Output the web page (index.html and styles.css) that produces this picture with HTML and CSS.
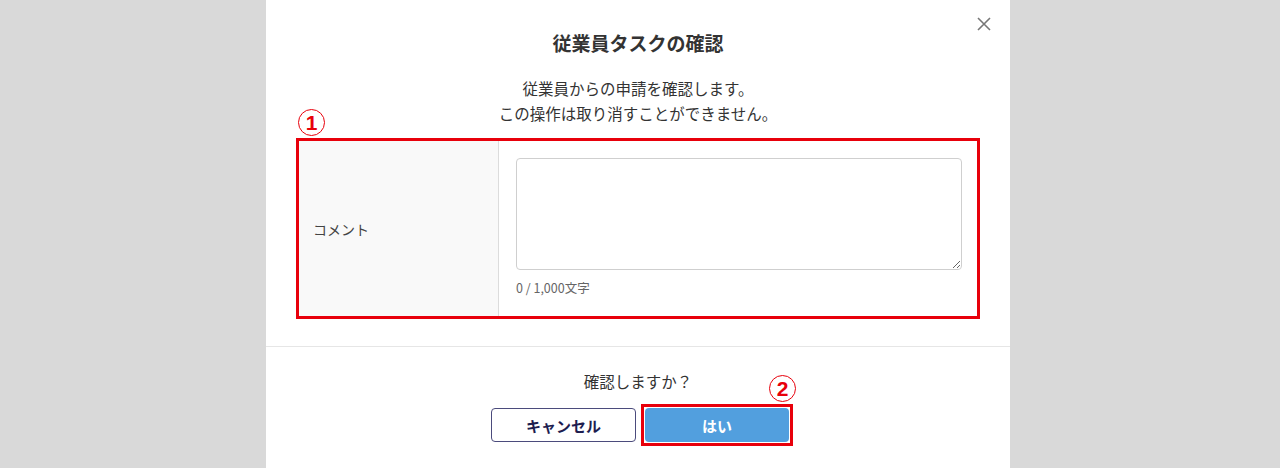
FILE: index.html
```html
<!DOCTYPE html>
<html lang="ja">
<head>
    <meta charset="UTF-8">
    <meta name="viewport" content="width=device-width, initial-scale=1.0">
    <title>従業員タスクの確認</title>
    <link rel="stylesheet" href="styles.css">
</head>
<body>
    <div class="modal">
        <div class="modal-header">
            <h2>従業員タスクの確認</h2>
            <button class="close" aria-label="閉じる">
                <svg width="14" height="14" viewBox="0 0 14 14">
                    <path d="M1 1 L13 13 M13 1 L1 13" stroke="#777" stroke-width="1.6" fill="none"/>
                </svg>
            </button>
        </div>

        <div class="modal-body">
            <p class="lead">従業員からの申請を確認します。<br>この操作は取り消すことができません。</p>

            <div class="form-box">
                <span class="mark mark-1">1</span>
                <div class="form-label">コメント</div>
                <div class="form-field">
                    <textarea></textarea>
                    <div class="counter">0 / 1,000文字</div>
                </div>
            </div>
        </div>

        <div class="modal-footer">
            <p class="question">確認しますか？</p>
            <div class="buttons">
                <button class="btn btn-cancel">キャンセル</button>
                <span class="highlight">
                    <button class="btn btn-ok">はい</button>
                    <span class="mark mark-2">2</span>
                </span>
            </div>
        </div>
    </div>
</body>
</html>
```

FILE: styles.css
```css
html, body {
    margin: 0;
    height: 100%;
    overflow: hidden;
}
body {
    background-color: #d9d9d9;
    font-family: "Noto Sans CJK JP", "Liberation Sans", sans-serif;
    color: #333;
}
.modal {
    width: 744px;
    height: 100%;
    margin-left: 266px;
    background-color: white;
}
.modal-header {
    position: relative;
    padding-top: 30px;
    text-align: center;
}
.modal-header h2 {
    margin: 0;
    font-size: 19px;
    line-height: 26px;
    font-weight: bold;
    color: #333;
}
.close {
    position: absolute;
    top: 17px;
    right: 19px;
    padding: 0;
    border: none;
    background: none;
    width: 14px;
    height: 14px;
}
.modal-body {
    padding: 20px 30px 27px 30px;
}
.lead {
    margin: 0 0 12px 0;
    text-align: center;
    font-size: 15.5px;
    line-height: 25px;
}
.form-box {
    position: relative;
    display: flex;
    height: 175px;
    border: 3px solid #e8000b;
}
.form-label {
    width: 200px;
    display: flex;
    align-items: center;
    padding-left: 14px;
    box-sizing: border-box;
    background-color: #f9f9f9;
    border-right: 1px solid #dcdcdc;
    font-size: 14px;
    color: #444;
}
.form-field {
    flex: 1;
    padding: 17px 15px 0 17px;
}
.form-field textarea {
    display: block;
    width: 100%;
    height: 112px;
    box-sizing: border-box;
    border: 1px solid #cfcfcf;
    border-radius: 4px;
    resize: vertical;
}
.counter {
    margin-top: 8px;
    font-size: 12.5px;
    color: #666;
}
.mark {
    position: absolute;
    width: 25px;
    height: 25px;
    border: 1.5px solid #e8000b;
    border-radius: 50%;
    color: #e8000b;
    font-family: "Liberation Sans", sans-serif;
    font-weight: bold;
    font-size: 21px;
    line-height: 25px;
    text-align: center;
}
.mark-1 {
    left: -1px;
    top: -32px;
}
.modal-footer {
    border-top: 1px solid #e6e6e6;
    padding-top: 23px;
    text-align: center;
}
.question {
    margin: 0 0 12px 0;
    font-size: 15.5px;
    line-height: 22px;
}
.buttons {
    display: flex;
    justify-content: center;
    align-items: center;
    gap: 5px;
    padding-left: 8px;
}
.btn {
    height: 34px;
    border-radius: 4px;
    font-family: "Noto Sans CJK JP", "Liberation Sans", sans-serif;
    font-size: 15px;
    font-weight: bold;
}
.btn-cancel {
    width: 145px;
    background-color: white;
    border: 1px solid #4b4b7c;
    color: #1d1d50;
}
.highlight {
    position: relative;
    display: block;
    padding: 1px;
    border: 3px solid #e8000b;
}
.btn-ok {
    display: block;
    width: 144px;
    background-color: #529fde;
    border: none;
    color: white;
}
.mark-2 {
    right: -6px;
    top: -32px;
}
```
